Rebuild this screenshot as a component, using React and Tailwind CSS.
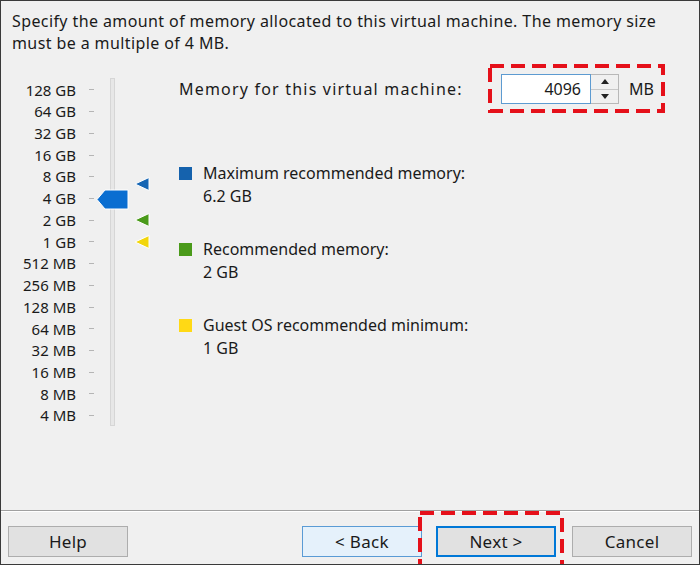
import React from "react";

const LABELS = [
  "128 GB", "64 GB", "32 GB", "16 GB", "8 GB", "4 GB", "2 GB", "1 GB",
  "512 MB", "256 MB", "128 MB", "64 MB", "32 MB", "16 MB", "8 MB", "4 MB",
];

const ROW = 21.73;
const font = { fontFamily: '"Noto Sans", "Open Sans", sans-serif' };

const Triangle = ({ color, top }) => (
  <svg
    className="absolute left-[33px]"
    style={{ top }}
    width="16"
    height="14"
    viewBox="0 0 16 14"
  >
    <polygon points="1,7 15,0.5 15,13.5" fill={color} stroke="#ffffff" strokeWidth="1" />
  </svg>
);

const LegendItem = ({ color, label, value, mt }) => (
  <div className={`flex ${mt}`}>
    <div className={`w-[13px] h-[13px] mt-[5px] ${color}`} />
    <div className="ml-[11px] leading-[23px]">
      <div>{label}</div>
      <div>{value}</div>
    </div>
  </div>
);

const Button = ({ children, variant = "default" }) => {
  const styles = {
    default: "bg-[#e1e1e1] border border-[#adadad]",
    back: "bg-[#e5f1fb] border border-[#5a9bd5]",
    next: "bg-[#e1e1e1] border-2 border-[#0078d7]",
  };
  return (
    <button
      className={`w-[120px] h-[31px] text-[17px] tracking-[0.3px] text-[#1a1a1a] flex items-center justify-center ${styles[variant]}`}
    >
      {children}
    </button>
  );
};

// red dashed highlight drawn over the dialog
const Highlight = ({ className, w, h }) => (
  <svg className={`absolute ${className}`} width={w} height={h}>
    <rect
      x="2"
      y="2"
      width={w - 4}
      height={h - 4}
      fill="none"
      stroke="#e5101a"
      strokeWidth="4"
      strokeDasharray="14 7"
    />
  </svg>
);

export default function App() {
  return (
    <div
      className="w-[700px] h-[565px] bg-[#f0f0f0] border border-[#3a3a3a] flex flex-col relative overflow-hidden text-[#1a1a1a]"
      style={font}
    >
      {/* Header description */}
      <div className="pl-[11px] pt-[9px] text-[16px] leading-[22px] tracking-[0.4px]">
        <div>Specify the amount of memory allocated to this virtual machine. The memory size</div>
        <div>must be a multiple of 4 MB.</div>
      </div>

      <div className="flex flex-1">
        {/* Slider column */}
        <div className="flex pt-[25px]">
          <div className="w-[75px] text-right text-[15px]">
            {LABELS.map((l) => (
              <div key={l} className="flex items-center justify-end" style={{ height: ROW }}>
                {l}
              </div>
            ))}
          </div>
          <div className="w-[25px] pl-[13px]">
            {LABELS.map((l) => (
              <div key={l} className="flex items-center" style={{ height: ROW }}>
                <div className="w-[5px] h-[1px] bg-[#b5b5b5]" />
              </div>
            ))}
          </div>
          <div className="relative w-[60px]">
            <div className="ml-[9px] -mt-[1px] w-[5px] h-[348px] bg-[#e7e7e7] border border-[#d6d6d6]" />
            {/* current value thumb */}
            <svg className="absolute left-[-5px] top-[110px]" width="34" height="21" viewBox="0 0 34 21">
              <polygon points="1,10.5 9,1 32,1 32,20 9,20" fill="#0a6ed1" stroke="#ffffff" strokeWidth="1" />
            </svg>
            <Triangle color="#1666b4" top={98} />
            <Triangle color="#4a9a1a" top={134} />
            <Triangle color="#f2d60c" top={156} />
          </div>
        </div>

        {/* Right side */}
        <div className="flex-1 pt-[20px] pl-[18px] text-[16px]">
          <div className="flex items-center h-[30px]">
            <span className="w-[322px] tracking-[1.2px]">Memory for this virtual machine:</span>
            <div className="flex h-[30px]">
              <div className="w-[90px] bg-white border border-[#5d9bd1] text-right pr-[9px] leading-[28px]">
                4096
              </div>
              <div className="w-[28px] flex flex-col border border-l-0 border-[#b8b8b8] bg-[#f0f0f0]">
                <div className="flex-1 flex items-center justify-center border-b border-[#c8c8c8]">
                  <svg width="8" height="5" viewBox="0 0 8 5"><polygon points="4,0 8,5 0,5" fill="#222" /></svg>
                </div>
                <div className="flex-1 flex items-center justify-center">
                  <svg width="8" height="5" viewBox="0 0 8 5"><polygon points="0,0 8,0 4,5" fill="#222" /></svg>
                </div>
              </div>
            </div>
            <span className="ml-[10px]">MB</span>
          </div>

          <LegendItem color="bg-[#1562ad]" label="Maximum recommended memory:" value="6.2 GB" mt="mt-[58px]" />
          <LegendItem color="bg-[#4a9a1a]" label="Recommended memory:" value="2 GB" mt="mt-[30px]" />
          <LegendItem color="bg-[#ffd915]" label="Guest OS recommended minimum:" value="1 GB" mt="mt-[30px]" />
        </div>
      </div>

      {/* Footer */}
      <div className="border-t border-[#a0a0a0]">
        <div className="border-t border-white flex items-center px-[7px] pt-[14px] pb-[7px]">
          <Button>Help</Button>
          <div className="flex-1" />
          <Button variant="back">&lt; Back</Button>
          <div className="w-[14px]" />
          <Button variant="next">Next &gt;</Button>
          <div className="w-[16px]" />
          <Button>Cancel</Button>
        </div>
      </div>

      {/* Highlight overlays */}
      <Highlight className="left-[487px] top-[63px]" w={177} h={49} />
      <Highlight className="left-[417px] top-[510px]" w={146} h={60} />
    </div>
  );
}
